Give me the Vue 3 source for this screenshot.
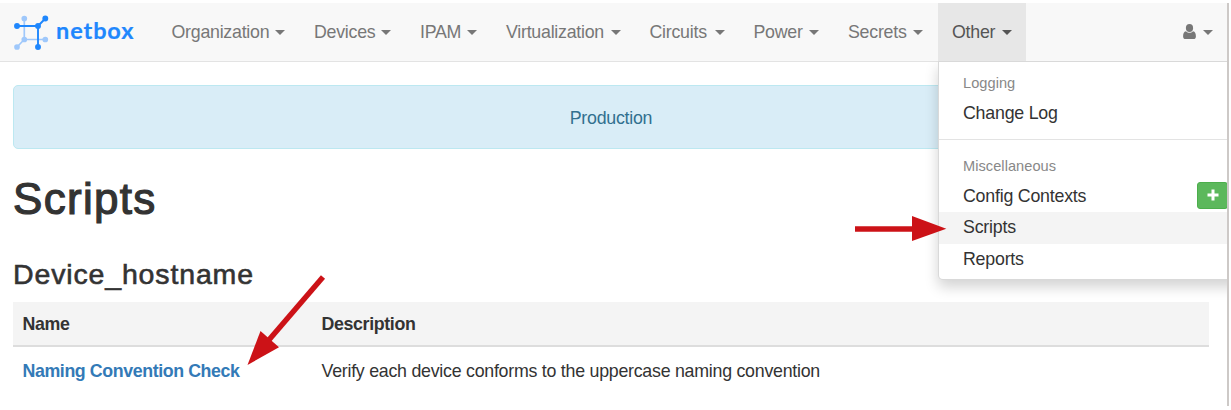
<script setup>
const navItems = [
  { label: 'Organization', cls: 'organization' },
  { label: 'Devices', cls: 'devices' },
  { label: 'IPAM', cls: 'ipam' },
  { label: 'Virtualization', cls: 'virtualization' },
  { label: 'Circuits', cls: 'circuits' },
  { label: 'Power', cls: 'power' },
  { label: 'Secrets', cls: 'secrets' },
  { label: 'Other', cls: 'other' },
]
</script>

<template>
  <div class="page">
    <nav class="navbar">
      <a class="brand">
        <svg class="logo" width="36" height="36" viewBox="0 0 36 36">
          <g stroke="#9fc8fb" fill="#9fc8fb" stroke-width="1.7">
            <path d="M11.3 4.5V25.5H32.3M11.3 25.5L4 33" fill="none" />
            <circle cx="11.3" cy="4.5" r="2" />
            <circle cx="11.3" cy="25.5" r="2" />
            <circle cx="32.3" cy="25.5" r="2" />
            <circle cx="4" cy="33" r="2" />
          </g>
          <g stroke="#1f87fd" fill="#1f87fd" stroke-width="1.9">
            <path d="M4 12H25V33M25 12L32.3 4.5" fill="none" />
            <circle cx="4" cy="12" r="2" />
            <circle cx="25" cy="12" r="2" />
            <circle cx="25" cy="33" r="2" />
            <circle cx="32.3" cy="4.5" r="2" />
          </g>
        </svg>
        <span class="brand-name">netbox</span>
      </a>
      <ul class="nav">
        <li v-for="item in navItems" :key="item.label" :class="item.cls">
          <span>{{ item.label }}</span><i class="caret"></i>
        </li>
      </ul>
      <div class="user">
        <svg width="13" height="16" viewBox="0 0 13 16" fill="#777">
          <ellipse cx="6.5" cy="4.1" rx="3.6" ry="4" />
          <path d="M3 7.2C.8 7.5.1 9.7.1 12.4C.1 14 1 15.1 2.6 15.1H10.4C12 15.1 12.9 14 12.9 12.4C12.9 9.7 12.2 7.5 10 7.2C8 9.2 5 9.2 3 7.2Z" />
        </svg>
        <i class="caret"></i>
      </div>
    </nav>

    <main>
      <div class="alert">Production</div>
      <h1>Scripts</h1>
      <h3>Device_hostname</h3>
      <table>
        <thead>
          <tr><th class="name">Name</th><th>Description</th></tr>
        </thead>
        <tbody>
          <tr>
            <td><a class="script-link">Naming Convention Check</a></td>
            <td>Verify each device conforms to the uppercase naming convention</td>
          </tr>
        </tbody>
      </table>
    </main>

    <div class="menu-clip">
      <div class="menu">
        <div class="menu-header">Logging</div>
        <div class="item">Change Log</div>
        <div class="divider"></div>
        <div class="menu-header">Miscellaneous</div>
        <div class="item">
          <span>Config Contexts</span>
          <span class="add">
            <svg width="12" height="12" viewBox="0 0 12 12"><path d="M6 .5V11.5M.5 6H11.5" stroke="#fff" stroke-width="3" /></svg>
          </span>
        </div>
        <div class="item active">Scripts</div>
        <div class="item">Reports</div>
      </div>
    </div>
    <div class="edge"></div>

    <svg class="arrows" width="1231" height="410" viewBox="0 0 1231 410">
      <g fill="#cc1217" stroke="#cc1217">
        <path d="M855 229H914" stroke-width="5.6" />
        <path d="M912 216L946.3 228.7L912 241Z" stroke="none" />
        <path d="M323 277L268 341" stroke-width="5.4" />
        <path d="M247.5 365L260.5 331L279 347.3Z" stroke="none" />
      </g>
    </svg>
  </div>
</template>

<style>
html,
body {
  margin: 0;
  background: #fff;
  overflow: hidden;
}
</style>

<style scoped>
.page {
  position: relative;
  width: 1231px;
  height: 410px;
  box-sizing: border-box;
  padding-top: 2.5px;
  overflow: hidden;
  font: 17.8px/24px "Liberation Sans", Arial, sans-serif;
  letter-spacing: -0.25px;
  color: #333;
}
.navbar {
  display: flex;
  width: 1228px;
  height: 59px;
  box-sizing: border-box;
  background: #f8f8f8;
  border-bottom: 1px solid #e3e3e3;
  color: #777;
}
.brand {
  display: flex;
  width: 157px;
}
.logo {
  flex: none;
  margin: 11.5px 0 0 13px;
}
.brand-name {
  margin: 13px 0 0 7px;
  font: 700 23.5px/28px "Lato", sans-serif;
  letter-spacing: 0.9px;
  -webkit-text-stroke: 0.2px #1f87fd;
  color: #1f87fd;
}
.nav {
  display: flex;
  margin: 0;
  padding: 0;
  list-style: none;
}
.nav li {
  display: flex;
  justify-content: space-between;
  box-sizing: border-box;
  padding: 17.5px 14.5px 0;
  white-space: nowrap;
}
.nav .organization { width: 142.5px; }
.nav .devices { width: 106px; }
.nav .ipam { width: 86px; }
.nav .virtualization { width: 143.5px; }
.nav .circuits { width: 104px; }
.nav .power { width: 94.5px; }
.nav .secrets { width: 104px; }
.nav .other {
  width: 88.5px;
  background: #e7e7e7;
  color: #555;
}
.caret {
  width: 0;
  margin-top: 10px;
  height: 0;
  border: 5px solid transparent;
  border-top-color: currentColor;
  border-bottom: 0;
}
.user {
  display: flex;
  margin: 21.5px 15px 0 auto;
}
.user .caret {
  margin: 6px 0 0 7px;
}
main {
  width: 1196px;
  margin: 23.5px 0 0 13px;
}
.alert {
  height: 64px;
  box-sizing: border-box;
  border: 1px solid #bce8f1;
  border-radius: 5px;
  background: #d9edf7;
  color: #31708f;
  line-height: 65px;
  text-align: center;
}
h1,
h3 {
  margin: 0;
  font-weight: 400;
  white-space: nowrap;
}
h1 {
  height: 102px;
  font-size: 44px;
  line-height: 100px;
  letter-spacing: 1.3px;
  -webkit-text-stroke: 1.2px #333;
}
h3 {
  height: 51px;
  font-size: 28.5px;
  line-height: 47px;
  letter-spacing: 0.85px;
  -webkit-text-stroke: 0.6px #333;
}
table {
  width: 100%;
  border-collapse: separate;
  border-spacing: 0;
  table-layout: fixed;
}
th,
td {
  padding: 0 9.5px;
  text-align: left;
}
th {
  height: 43px;
  background: #f4f4f4;
  border-bottom: 2px solid #ddd;
  letter-spacing: -0.35px;
}
.name {
  width: 280px;
}
td {
  height: 47px;
}
.script-link {
  font-weight: 700;
  letter-spacing: -0.4px;
  color: #337ab7;
}
.menu-clip {
  position: absolute;
  left: 918px;
  top: 61px;
  width: 310px;
  height: 240px;
  overflow: hidden;
}
.menu {
  width: 340px;
  height: 219px;
  box-sizing: border-box;
  margin-left: 20px;
  padding-top: 7px;
  background: #fff;
  border: 1px solid #ccc;
  border-color: rgba(0, 0, 0, 0.15);
  border-radius: 0 0 5px 5px;
  box-shadow: 0 7px 14px rgba(0, 0, 0, 0.175);
}
.menu-header {
  height: 28.5px;
  padding-left: 24px;
  font-size: 14.6px;
  line-height: 29px;
  letter-spacing: 0.05px;
  color: #888;
}
.item {
  display: flex;
  height: 31.5px;
  padding-left: 24px;
  line-height: 31px;
  letter-spacing: -0.22px;
}
.active {
  background: #f4f4f4;
}
.divider {
  height: 1px;
  margin: 10px 0 12px;
  background: #e3e3e3;
}
.add {
  display: flex;
  width: 31px;
  height: 27px;
  box-sizing: border-box;
  margin: 1.5px 49px 0 auto;
  padding: 6px 0 0 9px;
  border: 1px solid #4cae4c;
  border-radius: 3px;
  background: #5cb85c;
}
.edge {
  position: absolute;
  left: 1227px;
  top: 3px;
  width: 2px;
  height: 403px;
  background: #cdc9c7;
}
.arrows {
  position: absolute;
  left: 0;
  top: 0;
}
</style>
